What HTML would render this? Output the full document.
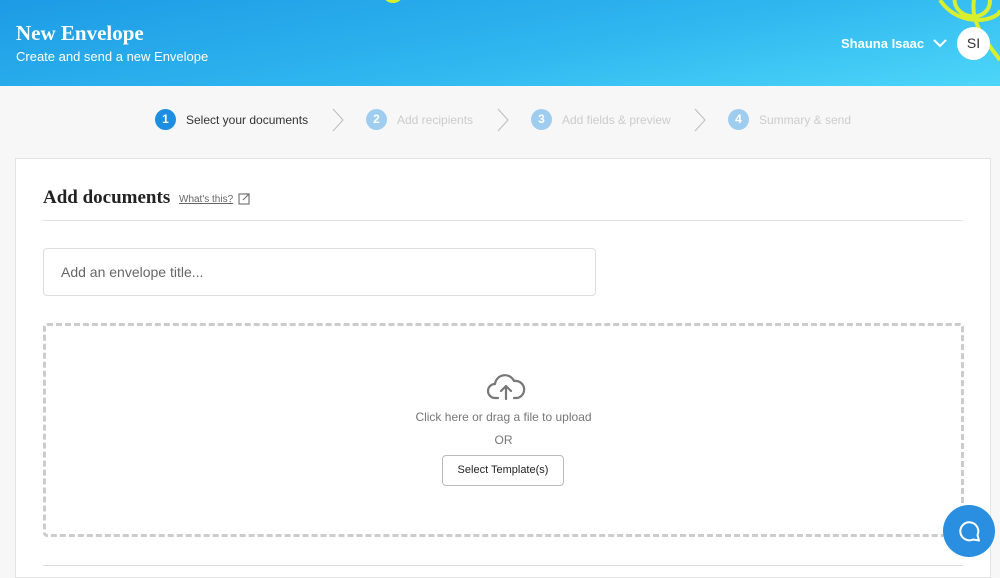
<!DOCTYPE html>
<html><head><meta charset="utf-8"><style>
*{box-sizing:border-box;margin:0;padding:0}
body{width:1000px;height:566px;overflow:hidden;background:#f7f7f7;font-family:"Liberation Sans",sans-serif;position:relative}
.hdr{position:absolute;left:0;top:0;width:1000px;height:86px;background:linear-gradient(170deg,#1d9be5 0%,#2fb6ef 55%,#4dd6f9 100%);overflow:hidden}
.hdr h1{position:absolute;left:16px;top:21px;font-family:"Liberation Serif",serif;font-weight:bold;font-size:21px;color:#fff}
.hdr p{position:absolute;left:16px;top:49px;font-size:13px;color:#fff}
.name{position:absolute;left:841px;top:36px;color:#fff;font-size:13px;font-weight:600}
.av{position:absolute;left:957px;top:27px;width:33px;height:33px;border-radius:50%;background:#fff;color:#333;font-size:14px;text-align:center;line-height:33px}
.steps{position:absolute;top:109px;left:0;width:1000px;font-size:12px}
.st{position:absolute;display:flex;align-items:center;gap:10px;color:#ccc}
.c{width:21px;height:21px;border-radius:50%;background:#9fcdf0;color:#fff;text-align:center;line-height:21px;font-size:12px;font-weight:bold}
.card{position:absolute;left:15px;top:158px;width:976px;height:420px;background:#fff;border:1px solid #e3e3e3}
.t{position:absolute;left:27px;top:28px;font-family:"Liberation Serif",serif;font-weight:bold;font-size:19px;color:#222}
.w{position:absolute;left:163px;top:35px;font-size:10px;color:#666;text-decoration:underline}
.hr{position:absolute;left:27px;right:27px;top:61px;border-top:1px solid #e3e3e3}
.in{position:absolute;left:27px;top:89px;width:553px;height:48px;border:1px solid #ddd;border-radius:4px;font-size:14px;color:#666;padding:15px 17px}
.drop{position:absolute;left:27px;top:164px;width:921px;height:214px;border:3px dashed #ccc;border-radius:4px}
.btn{position:absolute;left:396px;top:129px;width:122px;height:31px;border:1px solid #bbb;border-radius:4px;font-size:11px;color:#222;text-align:center;line-height:29px}
.chat{position:absolute;left:943px;top:505px;width:52px;height:52px;border-radius:50%;background:#2a8fe0}
</style></head><body>
<div class="hdr">
<svg width="1000" height="86" style="position:absolute;left:0;top:0" fill="none" stroke="#d8ef2e" stroke-width="4">
<circle cx="393" cy="-8" r="9"/>
<path d="M955 -5 C950 20 990 25 990 0 M975 -5 C968 20 985 40 1000 60 M940 0 C960 30 1000 20 1000 10"/>
</svg>
<h1>New Envelope</h1><p>Create and send a new Envelope</p>
<div class="name">Shauna Isaac</div>
<svg width="14" height="10" style="position:absolute;left:933px;top:38px" fill="none" stroke="#fff" stroke-width="2"><path d="M1 2l6 6 6-6"/></svg>
<div class="av">SI</div>
</div>
<div class="steps">
<div class="st" style="left:155px;color:#333"><div class="c" style="background:#1e8fe0">1</div>Select your documents</div>
<div class="st" style="left:366px"><div class="c">2</div>Add recipients</div>
<div class="st" style="left:531px"><div class="c">3</div>Add fields &amp; preview</div>
<div class="st" style="left:728px"><div class="c">4</div>Summary &amp; send</div>
<svg width="1000" height="24" style="position:absolute;left:0;top:-1px" fill="none" stroke="#bbb" stroke-width="1"><path d="M333 1l10 11-10 11M498 1l10 11-10 11M695 1l10 11-10 11"/></svg>
</div>
<div class="card">
<div class="t">Add documents</div>
<div class="w">What's this?</div>
<svg width="12" height="12" style="position:absolute;left:222px;top:34px" fill="none" stroke="#777" stroke-width="1.2"><rect x="1" y="1" width="10" height="10"/><path d="M5 7l6-6M8 1h3v3"/></svg>
<div class="hr"></div>
<div class="in">Add an envelope title...</div>
<div class="drop">
<svg width="40" height="30" style="position:absolute;left:440px;top:46px" fill="none" stroke="#777" stroke-width="2.2" stroke-linecap="round" stroke-linejoin="round"><path d="M12 26H9a7 7 0 0 1 0-14a10 10 0 0 1 19-3a8 8 0 0 1 3 17h-3M20 27V14M15 19l5-5 5 5"/></svg>
<div style="position:absolute;left:0;right:0;top:84px;text-align:center;font-size:12px;color:#777">Click here or drag a file to upload</div>
<div style="position:absolute;left:0;right:0;top:107px;text-align:center;font-size:12px;color:#777">OR</div>
<div class="btn">Select Template(s)</div>
</div>
<div style="position:absolute;left:27px;right:27px;top:406px;border-top:1px solid #ddd"></div>
</div>
<div class="chat"><svg width="52" height="52" fill="none" stroke="#fff" stroke-width="2" stroke-linejoin="round"><path d="M30 34.5a9 9 0 1 1 4.5-4.5l1.5 5.5z"/></svg></div>
</body></html>
